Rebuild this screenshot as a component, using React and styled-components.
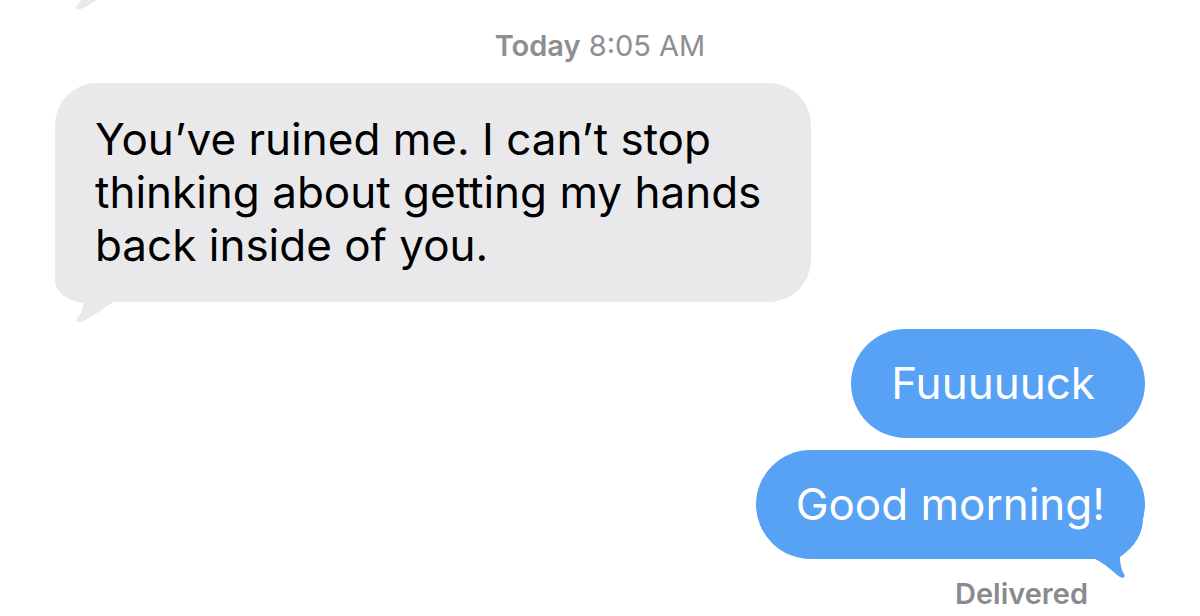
import React from "react";
import styled, { createGlobalStyle } from "styled-components";

const GlobalStyle = createGlobalStyle`
  html, body { margin: 0; padding: 0; background: #ffffff; }
  body { font-family: Inter, "Noto Sans", "Liberation Sans", sans-serif; }
`;

const GRAY = "#e9e9eb";
const BLUE = "#57a2f5";

const Screen = styled.div`
  width: 1200px;
  height: 616px;
  overflow: hidden;
  background: #ffffff;
  -webkit-font-smoothing: antialiased;
`;

const Thread = styled.div`
  display: flex;
  flex-direction: column;
  padding: 0 55px;
`;

const Bubble = styled.div`
  position: relative;
  box-sizing: border-box;
  font-size: 44px;
  line-height: 53px;
  letter-spacing: 0;
  white-space: pre-line;
  align-self: ${(p) => (p.$sent ? "flex-end" : "flex-start")};
  background: ${(p) => (p.$sent ? BLUE : GRAY)};
  color: ${(p) => (p.$sent ? "#ffffff" : "#000000")};
  border-radius: ${(p) => (p.$sent ? "56px" : "42px")};
  padding: ${(p) => (p.$sent ? "28px" : "30px")} ${(p) => p.$padRight || 50}px
    ${(p) => (p.$sent ? "28px" : "30px")} 40px;
  margin-top: ${(p) => p.$gap || 0}px;
  min-height: ${(p) => p.$minHeight || 0}px;
  width: ${(p) => (p.$width ? `${p.$width}px` : "auto")};
`;

const Label = styled.span`
  position: relative;
  z-index: 1;
`;

const TailSvg = styled.svg`
  position: absolute;
  z-index: 0;
  bottom: -20px;
  width: 60px;
  height: 60px;
  ${(p) => (p.$sent ? "right: 0;" : "left: 0;")}
  pointer-events: none;
`;

const ReceivedTail = () => (
  <TailSvg viewBox="0 0 60 60" $sent={false}>
    <path
      fill={GRAY}
      d="M0 0 L0 18 C0 30 11 38 28 41 C28 48 26 53 22 56 C20 59 23 61 26 60 C38 55 48 46 58 40 L58 0 Z"
    />
  </TailSvg>
);

const SentTail = () => (
  <TailSvg viewBox="0 0 60 60" $sent>
    <path
      fill={BLUE}
      d="M0 40 L0 0 L58 0 C58 14 50 28 35 38 C35 46 37 52 39 55 C41 58 38 60 35 58 C27 52 19 44 10 40 Z"
    />
  </TailSvg>
);

const Timestamp = styled.div`
  align-self: center;
  margin-top: 39px;
  font-size: 29px;
  line-height: 35px;
  color: #8e8e93;
`;

const Day = styled.span`
  font-weight: 600;
`;

const Status = styled.div`
  align-self: flex-end;
  margin-top: 17px;
  margin-right: 57px;
  font-size: 29px;
  line-height: 35px;
  font-weight: 600;
  color: #8a8a8e;
`;

export default function App() {
  return (
    <Screen>
      <GlobalStyle />
      <Thread>
        <Bubble $gap={-111} $minHeight={100} $width={600}>
          <ReceivedTail />
        </Bubble>
        <Timestamp>
          <Day>Today</Day> 8:05 AM
        </Timestamp>
        <Bubble $gap={20}>
          <ReceivedTail />
          <Label>
            {"You’ve ruined me. I can’t stop\nthinking about getting my hands\nback inside of you."}
          </Label>
        </Bubble>
        <Bubble $sent $gap={27}>
          <Label>Fuuuuuck</Label>
        </Bubble>
        <Bubble $sent $gap={12} $padRight={40}>
          <SentTail />
          <Label>Good morning!</Label>
        </Bubble>
        <Status>Delivered</Status>
      </Thread>
    </Screen>
  );
}
